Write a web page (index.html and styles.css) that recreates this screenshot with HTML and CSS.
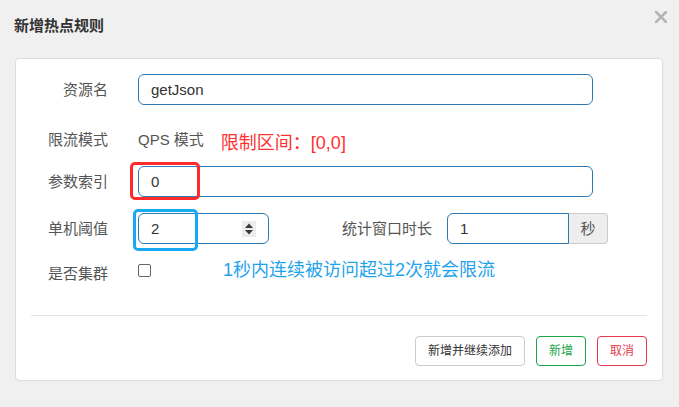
FILE: index.html
```html
<!DOCTYPE html>
<html lang="zh-CN">
<head>
<meta charset="utf-8">
<title>新增热点规则</title>
<link rel="stylesheet" href="styles.css">
</head>
<body>
<div class="modal">
  <div class="header">
    <h4 class="title">新增热点规则</h4>
    <span class="close" aria-label="关闭">
      <svg width="12" height="12" viewBox="0 0 12 12"><path d="M1 1 L11 11 M11 1 L1 11" stroke="#b4b4b4" stroke-width="2.6" stroke-linecap="square"/></svg>
    </span>
  </div>
  <div class="card">
    <div class="form">
      <div class="row row1">
        <label class="label">资源名</label>
        <div class="field"><div class="input">getJson</div></div>
      </div>
      <div class="row row2">
        <label class="label">限流模式</label>
        <div class="field inline">
          <span class="static">QPS 模式</span>
          <span class="note-red">限制区间：[0,0]</span>
        </div>
      </div>
      <div class="row row3">
        <label class="label">参数索引</label>
        <div class="field"><div class="input">0</div></div>
      </div>
      <div class="row row4">
        <label class="label">单机阈值</label>
        <div class="field inline">
          <div class="input num">
            <span>2</span>
            <span class="spinner">
              <svg width="14" height="16" viewBox="0 0 14 16"><path d="M3 7 L11 7 L7 2.5 Z M3 9 L11 9 L7 13.5 Z" fill="#3a3a3a"/></svg>
            </span>
          </div>
          <label class="label2">统计窗口时长</label>
          <div class="group">
            <div class="input grp">1</div>
            <span class="addon">秒</span>
          </div>
        </div>
      </div>
      <div class="row row5">
        <label class="label lab5">是否集群</label>
        <div class="field inline top">
          <span class="checkbox"></span>
          <span class="note-blue">1秒内连续被访问超过2次就会限流</span>
        </div>
      </div>
    </div>
    <hr class="divider">
    <div class="footer">
      <button class="btn btn-default">新增并继续添加</button>
      <button class="btn btn-green">新增</button>
      <button class="btn btn-red">取消</button>
    </div>
  </div>
  <div class="mark mark-red"></div>
  <div class="mark mark-blue"></div>
</div>
</body>
</html>
```
FILE: styles.css
```css
* { box-sizing: border-box; }
html, body { margin: 0; padding: 0; }
body {
  background: #f0f0f0;
  font-family: "Liberation Sans", "Noto Sans CJK SC", sans-serif;
  color: #555;
  width: 679px;
  height: 407px;
  overflow: hidden;
}
.modal { position: relative; width: 679px; height: 407px; }
.header {
  display: flex;
  justify-content: space-between;
  align-items: flex-start;
  padding: 11px 12px 0 14px;
  height: 58px;
}
.title {
  margin: 5px 0 0;
  font-size: 15px;
  line-height: 20px;
  font-weight: bold;
  color: #333;
}
.close { display: block; width: 12px; height: 12px; }
.close svg { display: block; }
.card {
  margin: 0 16px 0 15px;
  background: #fff;
  border: 1px solid #dcdcdc;
  border-radius: 4px;
  padding: 15px 15px 14px;
}
.form { padding-right: 54px; }
.row { display: flex; align-items: center; height: 31px; }
.row2 { margin-top: 19px; }
.row3 { margin-top: 11px; }
.row4 { margin-top: 16px; }
.row5 { margin-top: 16px; height: 30px; align-items: flex-start; }
.label {
  width: 77px;
  margin-right: 30px;
  text-align: right;
  font-size: 15px;
  line-height: 20px;
  color: #555;
  flex: none;
}
.lab5 { margin-top: 4px; }
.field { flex: 1; min-width: 0; }
.inline { display: flex; align-items: center; }
.inline.top { align-items: flex-start; }
.input {
  height: 31px;
  border: 1px solid #2d7ab5;
  border-radius: 6px;
  padding: 0 12px;
  font-size: 15px;
  line-height: 29px;
  color: #333;
  background: #fff;
}
.static { font-size: 15px; line-height: 20px; color: #555; }
.note-red {
  margin-left: 17px;
  align-self: flex-start;
  margin-top: 6px;
  font-size: 18px;
  line-height: 24px;
  color: #ff3030;
}
.num {
  width: 131px;
  display: flex;
  align-items: center;
  justify-content: space-between;
  padding-right: 12px;
  flex: none;
}
.spinner {
  width: 14px;
  height: 16px;
  background: #ececec;
  display: block;
}
.spinner svg { display: block; }
.label2 {
  margin-left: 73px;
  margin-right: 15px;
  font-size: 15px;
  line-height: 20px;
  color: #555;
  flex: none;
}
.group { display: flex; width: 161px; flex: none; }
.grp {
  width: 122px;
  border-radius: 6px 0 0 6px;
  flex: none;
}
.addon {
  width: 39px;
  height: 31px;
  background: #eee;
  border: 1px solid #ccc;
  border-left: none;
  border-radius: 0 4px 4px 0;
  text-align: center;
  font-size: 15px;
  line-height: 29px;
  color: #555;
}
.checkbox {
  width: 13px;
  height: 13px;
  margin-top: 4px;
  border: 1px solid #666;
  border-radius: 2px;
  background: #fff;
  flex: none;
}
.note-blue {
  margin-left: 72px;
  margin-top: -2px;
  font-size: 18px;
  line-height: 24px;
  color: #1fa3ec;
}
.divider {
  margin: 25px 0 0;
  border: none;
  border-top: 1px solid #e5e5e5;
  height: 0;
}
.footer {
  display: flex;
  justify-content: flex-end;
  gap: 11px;
  margin-top: 20px;
}
.btn {
  height: 30px;
  padding: 0 12px;
  border: 1px solid #ccc;
  border-radius: 4px;
  background: #fff;
  font-family: "Liberation Sans", "Noto Sans CJK SC", sans-serif;
  font-size: 12px;
  line-height: 28px;
  color: #333;
}
.btn-green { border-color: #1aa64a; color: #1aa64a; }
.btn-red { border-color: #e6384c; color: #e6384c; }
.mark {
  position: absolute;
  border-radius: 5px;
  pointer-events: none;
}
.mark-red {
  left: 130px; top: 162px; width: 70px; height: 38px;
  border: 3px solid #ff2b2b;
}
.mark-blue {
  left: 133px; top: 209px; width: 65px; height: 42px;
  border: 3px solid #17aaf3;
}
```
